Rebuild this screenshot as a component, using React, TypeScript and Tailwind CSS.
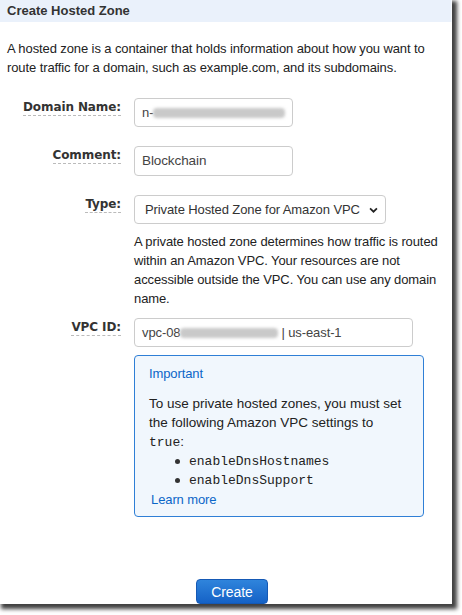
import React from 'react';

const LABEL = "font-['DejaVu_Sans',sans-serif] font-bold text-[12px] leading-[14px] text-[#333] border-b border-dashed border-[#bbb] pb-[1px]";

const Blur = ({ w }: { w: number }) => (
  <span
    className="inline-block h-[10px] align-middle bg-[#c9c9c9] rounded-sm blur-[1.5px]"
    style={{ width: w }}
  />
);

const Row = ({ label, children }: { label: string; children: React.ReactNode }) => (
  <div className="flex items-start">
    <div className="w-[121px] shrink-0 flex justify-end pt-[2px]">
      <span className={LABEL}>{label}</span>
    </div>
    <div className="ml-[13px] flex-1">{children}</div>
  </div>
);

export default function App() {
  return (
    <div className="w-[462px] h-[615px] bg-white overflow-hidden font-['Liberation_Sans',Arial,sans-serif] text-[13px] tracking-[-0.1px]">
      <div className="w-[452px] h-[604px] bg-white shadow-[3px_3px_4px_2px_rgba(0,0,0,0.75)] flex flex-col">
        {/* header */}
        <div className="h-[22px] bg-[#eaf1fb] border-r border-[#f6f9fd] flex items-center px-[7px]">
          <span className="font-bold text-[13px] tracking-normal text-[#333]">Create Hosted Zone</span>
        </div>

        <p className="mt-[17px] px-[7px] leading-[19px] text-[#222]">
          A hosted zone is a container that holds information about how you want to route traffic for a domain, such as example.com, and its subdomains.
        </p>

        <div className="mt-[21px] flex flex-col gap-[19px]">
          <Row label="Domain Name:">
            <div className="w-[159px] h-[29px] border border-[#ccc] rounded-[4px] px-[7px] flex items-center text-[#444]">
              <span>n-</span>
              <Blur w={136} />
            </div>
          </Row>
          <Row label="Comment:">
            <div className="w-[159px] h-[30px] border border-[#ccc] rounded-[4px] px-[7px] flex items-center text-[13.5px] text-[#444]">
              Blockchain
            </div>
          </Row>
          <Row label="Type:">
            <div className="w-[252px] h-[29px] border border-[#ccc] rounded-[4px] pl-[10px] pr-[7px] flex items-center justify-between text-[#333]">
              <span>Private Hosted Zone for Amazon VPC</span>
              <svg width="9" height="6" viewBox="0 0 10 7" fill="none" stroke="#222" strokeWidth="2">
                <path d="M1 1.5l4 4 4-4" />
              </svg>
            </div>
            <p className="mt-[8px] w-[312px] leading-[19px] text-[#222]">
              A private hosted zone determines how traffic is routed within an Amazon VPC. Your resources are not accessible outside the VPC. You can use any domain name.
            </p>
          </Row>
        </div>

        <div className="mt-[10px]">
          <Row label="VPC ID:">
            <div className="w-[279px] h-[29px] border border-[#ccc] rounded-[4px] px-[7px] flex items-center text-[#444]">
              <span>vpc-08</span>
              <Blur w={98} />
              <span className="ml-[3px]">| us-east-1</span>
            </div>
            <div className="mt-[8px] w-[290px] border border-[#2f7fd6] bg-[#f1f7fd] rounded-[4px] pl-[14px] pr-[10px] pt-[8px] pb-[7px] leading-[19px] text-[#222]">
              <div className="text-[#0b66c8] leading-[20px]">Important</div>
              <p className="mt-[10px] text-[13.5px] tracking-normal">
                To use private hosted zones, you must set
                <br />
                the following Amazon VPC settings to
                <br />
                <span className="font-['Liberation_Mono',monospace] text-[13px]">true</span>:
              </p>
              <ul className="font-['Liberation_Mono',monospace] text-[13px] tracking-normal leading-[19px]">
                <li className="flex items-center">
                  <span className="w-[5px] h-[5px] rounded-full bg-[#333] ml-[26px] mr-[9px]" />
                  enableDnsHostnames
                </li>
                <li className="flex items-center">
                  <span className="w-[5px] h-[5px] rounded-full bg-[#333] ml-[26px] mr-[9px]" />
                  enableDnsSupport
                </li>
              </ul>
              <div className="text-[#0b66c8] pl-[2px]">Learn more</div>
            </div>
          </Row>
        </div>

        <div className="flex-1 flex items-end justify-center pl-[12px]">
          <button className="w-[72px] h-[25px] rounded-[4px] bg-gradient-to-b from-[#2f84dc] to-[#1562c6] border border-[#1559b5] text-white text-[14px] leading-none">
            Create
          </button>
        </div>
      </div>
    </div>
  );
}
